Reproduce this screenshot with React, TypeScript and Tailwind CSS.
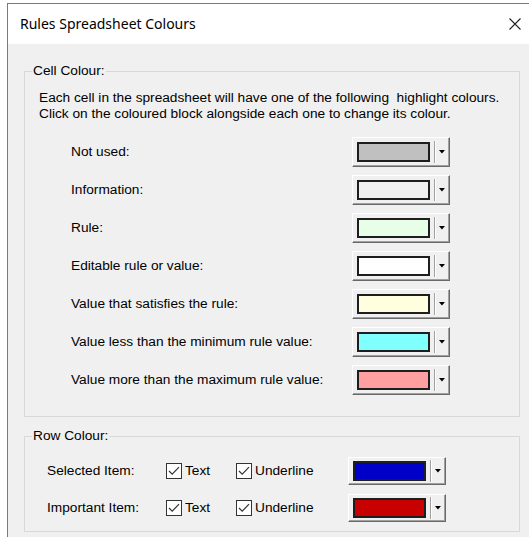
import React from 'react';

type CellRow = { label: string; color: string };

const cellRows: CellRow[] = [
  { label: 'Not used:', color: '#c0c0c0' },
  { label: 'Information:', color: '#f0f0f0' },
  { label: 'Rule:', color: '#e6ffe6' },
  { label: 'Editable rule or value:', color: '#ffffff' },
  { label: 'Value that satisfies the rule:', color: '#ffffe0' },
  { label: 'Value less than the minimum rule value:', color: '#80ffff' },
  { label: 'Value more than the maximum rule value:', color: '#ff9f9f' },
];

const rowItems = [
  { label: 'Selected Item:', color: '#0000c8' },
  { label: 'Important Item:', color: '#c80000' },
];

function ColourButton({ color, tall = true }: { color: string; tall?: boolean }) {
  return (
    <div
      className={`flex w-[98px] items-center border border-t-white border-l-white border-r-[#696969] border-b-[#696969] bg-[#f0f0f0] pl-[4px] pr-[4px] shadow-[inset_-1px_-1px_0_#a0a0a0] ${
        tall ? 'h-[30px]' : 'h-[28px]'
      }`}
    >
      <div className="h-[20px] w-[74px] border-2 border-[#1e1e1e]" style={{ backgroundColor: color }} />
      <div className="ml-[4px] h-[22px] w-[2px] border-l border-l-[#a0a0a0] border-r border-r-white" />
      <svg className="ml-[3px]" width="6" height="4" viewBox="0 0 6 4">
        <path d="M0 0h6L3 3.5z" fill="#000" />
      </svg>
    </div>
  );
}

function CheckBox({ label }: { label: string }) {
  return (
    <div className="flex items-center">
      <div className="flex h-[16px] w-[16px] items-center justify-center border border-[#333] bg-white">
        <svg width="12" height="10" viewBox="0 0 12 10">
          <path d="M1 5l3.2 3.2L11 1.2" fill="none" stroke="#333" strokeWidth="1.2" />
        </svg>
      </div>
      <span className="ml-[3px]">{label}</span>
    </div>
  );
}

function App() {
  return (
    <div
      className="min-h-screen overflow-hidden bg-white pl-[7px] pt-[3px] text-[13.7px] leading-[16px] text-black"
      style={{ fontFamily: '"Liberation Sans", Arial, sans-serif' }}
    >
      <div className="w-[600px] border-l border-t border-[#7a7a7a] bg-[#f0f0f0]">
        <div className="flex h-[40px] items-center bg-white pl-[12px]">
          <span className="text-[14px]" style={{ fontFamily: '"Noto Sans", sans-serif' }}>
            Rules Spreadsheet Colours
          </span>
          <svg className="ml-[313px]" width="12" height="12" viewBox="0 0 12 12">
            <path d="M0.5 0.5l11 11M11.5 0.5l-11 11" stroke="#222" strokeWidth="1.1" />
          </svg>
        </div>

        <div className="pl-[16px] pt-[19px] pb-[10px]">
          <fieldset className="w-[496px] border border-[#d8d8d8] pb-[21px]">
            <legend className="ml-[7px] px-[1px]">Cell Colour:</legend>
            <p className="mt-[11px] pl-[14px]">
              Each cell in the spreadsheet will have one of the following&nbsp; highlight colours.
              <br />
              Click on the coloured block alongside each one to change its colour.
            </p>
            <div className="mt-[15px] flex flex-col gap-[8px] pl-[46px]">
              {cellRows.map((row) => (
                <div key={row.label} className="flex items-center">
                  <span className="w-[281px]">{row.label}</span>
                  <ColourButton color={row.color} />
                </div>
              ))}
            </div>
          </fieldset>

          <fieldset className="mt-[11px] w-[496px] border border-[#d8d8d8] pb-[9px]">
            <legend className="ml-[7px] px-[1px]">Row Colour:</legend>
            <div className="mt-[13px] flex flex-col gap-[9px] pl-[22px]">
              {rowItems.map((row) => (
                <div key={row.label} className="flex items-center">
                  <span className="w-[119px]">{row.label}</span>
                  <div className="w-[70px]">
                    <CheckBox label="Text" />
                  </div>
                  <div className="w-[112px]">
                    <CheckBox label="Underline" />
                  </div>
                  <ColourButton color={row.color} tall={false} />
                </div>
              ))}
            </div>
          </fieldset>
        </div>
      </div>
    </div>
  );
}

export default App;
